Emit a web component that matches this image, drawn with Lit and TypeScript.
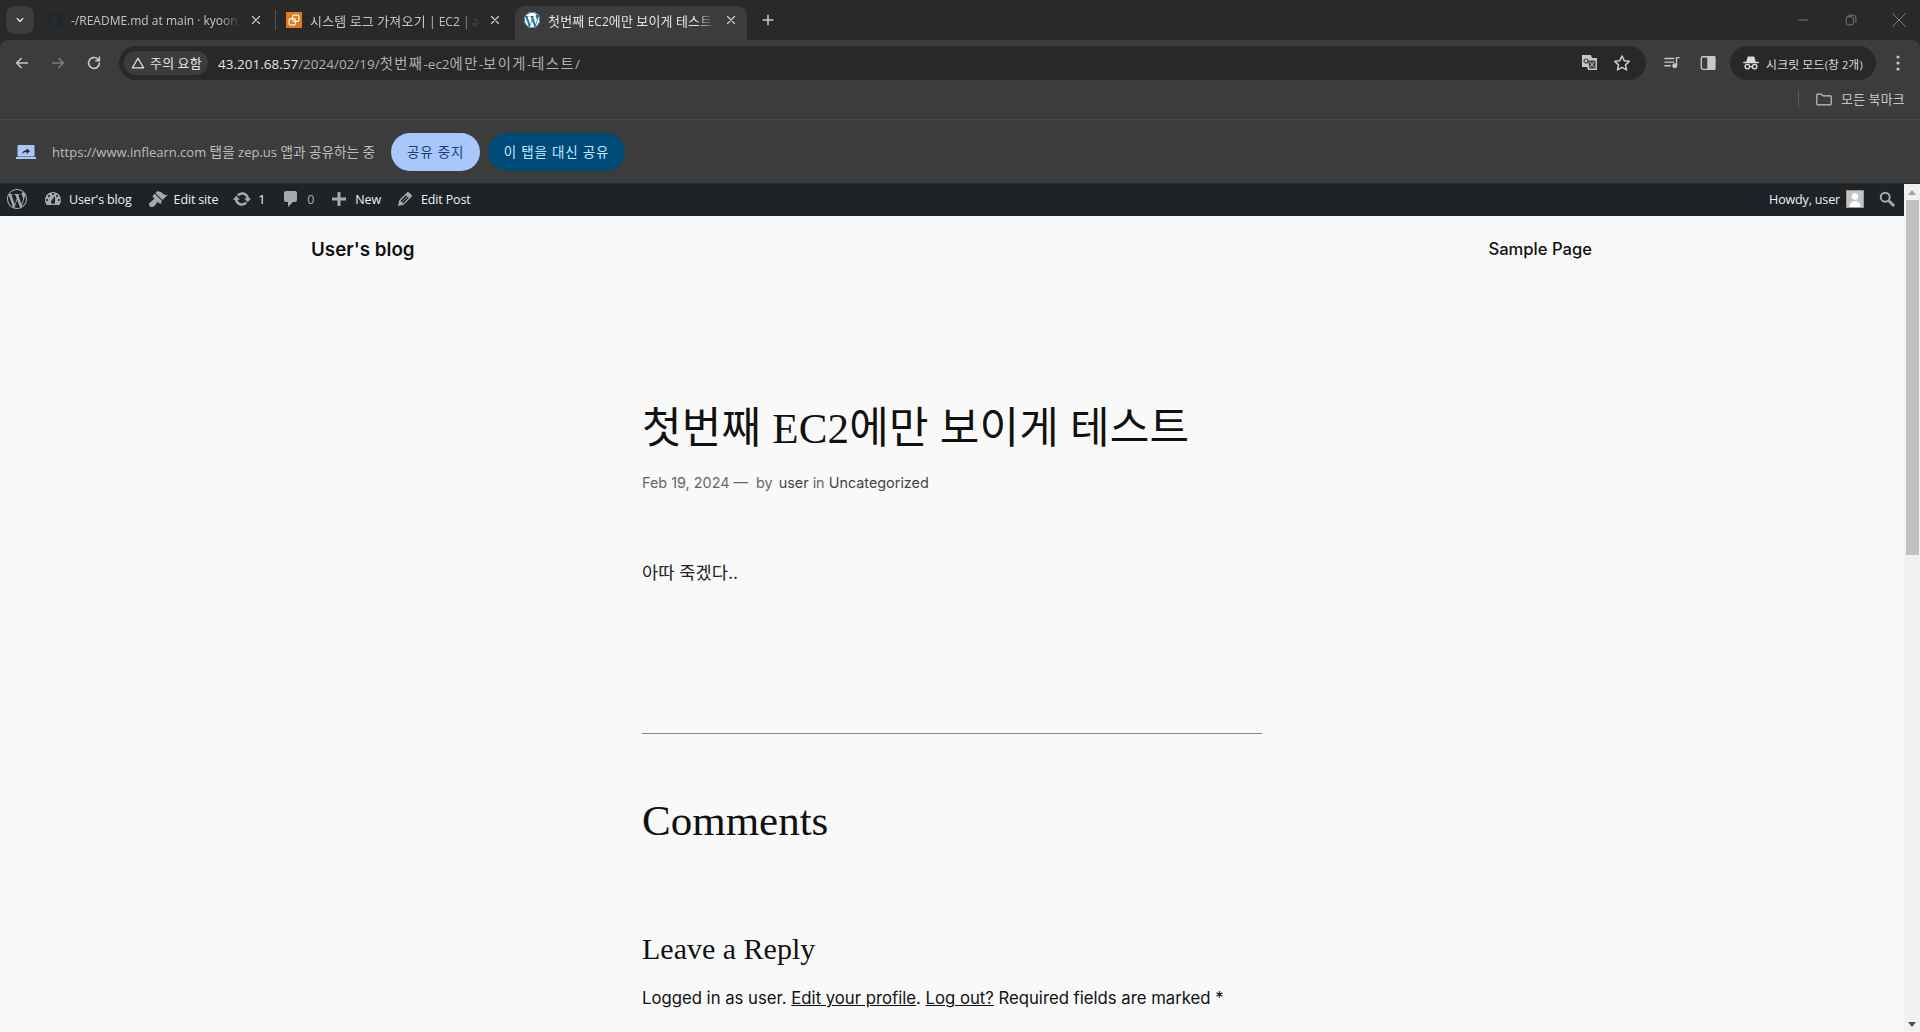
import {html, css, svg, LitElement} from 'lit';
import {customElement} from 'lit/decorators.js';
import {map} from 'lit/directives/map.js';

const WP_LOGO = 'M21.469 6.825c.84 1.537 1.318 3.3 1.318 5.175 0 3.979-2.156 7.456-5.363 9.325l3.295-9.527c.615-1.54.82-2.771.82-3.864 0-.405-.026-.78-.07-1.11m-7.981.105c.647-.03 1.232-.105 1.232-.105.582-.075.514-.93-.067-.899 0 0-1.755.135-2.88.135-1.064 0-2.85-.15-2.85-.15-.585-.03-.661.855-.075.885 0 0 .54.061 1.125.09l1.68 4.605-2.37 7.08L5.354 6.9c.649-.03 1.234-.1 1.234-.1.585-.075.516-.93-.065-.896 0 0-1.746.138-2.874.138-.2 0-.438-.008-.69-.015C4.911 3.15 8.235 1.215 12 1.215c2.809 0 5.365 1.072 7.286 2.833-.046-.003-.091-.009-.141-.009-1.06 0-1.812.923-1.812 1.914 0 .89.513 1.643 1.06 2.531.411.72.89 1.643.89 2.977 0 .915-.354 1.994-.821 3.479l-1.075 3.585-3.9-11.61.001.014zM12 22.784c-1.059 0-2.081-.153-3.048-.437l3.237-9.406 3.315 9.087c.024.053.05.101.078.149-1.12.393-2.325.609-3.582.609M1.211 12c0-1.564.336-3.05.935-4.39L7.29 21.709C3.694 19.96 1.212 16.271 1.211 12M12 0C5.385 0 0 5.385 0 12s5.385 12 12 12 12-5.385 12-12S18.615 0 12 0';
const GITHUB = 'M12 .297c-6.63 0-12 5.373-12 12 0 5.303 3.438 9.8 8.205 11.385.6.113.82-.258.82-.577 0-.285-.01-1.04-.015-2.04-3.338.724-4.042-1.61-4.042-1.61C4.422 18.07 3.633 17.7 3.633 17.7c-1.087-.744.084-.729.084-.729 1.205.084 1.838 1.236 1.838 1.236 1.07 1.835 2.809 1.305 3.495.998.108-.776.417-1.305.76-1.605-2.665-.3-5.466-1.332-5.466-5.93 0-1.31.465-2.38 1.235-3.22-.135-.303-.54-1.523.105-3.176 0 0 1.005-.322 3.3 1.23.96-.267 1.98-.399 3-.405 1.02.006 2.04.138 3 .405 2.28-1.552 3.285-1.23 3.285-1.23.645 1.653.24 2.873.12 3.176.765.84 1.23 1.91 1.23 3.22 0 4.61-2.805 5.625-5.475 5.92.42.36.81 1.096.81 2.22 0 1.606-.015 2.896-.015 3.286 0 .315.21.69.825.57C20.565 22.092 24 17.592 24 12.297c0-6.627-5.373-12-12-12';

/* dashicons, 20x20 */
const DASHBOARD = 'M3.76 16h12.48c1.1-1.37 1.76-3.11 1.76-5 0-4.42-3.58-8-8-8s-8 3.58-8 8c0 1.89.66 3.63 1.76 5zM10 4c.55 0 1 .45 1 1s-.45 1-1 1-1-.45-1-1 .45-1 1-1zM6 6c.55 0 1 .45 1 1s-.45 1-1 1-1-.45-1-1 .45-1 1-1zm8 0c.55 0 1 .45 1 1s-.45 1-1 1-1-.45-1-1 .45-1 1-1zm-5.37 5.55L12 7v6c0 1.1-.9 2-2 2s-2-.9-2-2c0-.57.24-1.08.63-1.45zM4 10c.55 0 1 .45 1 1s-.45 1-1 1-1-.45-1-1 .45-1 1-1zm12 0c.55 0 1 .45 1 1s-.45 1-1 1-1-.45-1-1 .45-1 1-1z';
const BRUSH = 'M14.48 11.06L7.41 3.99l1.5-1.5c.5-.56 2.3-.47 3.51.32 1.21.8 1.43 1.28 2.91 2.1 1.18.64 2.45 1.26 4.45.85zm-.71.71L6.7 4.7 4.93 6.47c-.39.39-.39 1.02 0 1.41l1.06 1.06c.39.39.39 1.03 0 1.42-.6.6-1.43 1.11-2.21 1.69-.35.26-.7.53-1.01.84C1.43 13.23 1 14.38 1 15.5 1 16.88 2.12 18 3.5 18c1.12 0 2.27-.43 3.13-1.34.31-.31.58-.66.84-1.01.58-.78 1.09-1.61 1.69-2.21.39-.39 1.03-.39 1.42 0l1.06 1.06c.39.39 1.02.39 1.41 0z';
const UPDATE = 'M10.2 3.28c3.53 0 6.43 2.61 6.92 6h2.08l-3.5 4-3.5-4h2.32c-.45-1.97-2.21-3.44-4.32-3.44-1.45 0-2.73.71-3.54 1.78L4.95 5.66C6.23 4.2 8.11 3.28 10.2 3.28zm-.4 13.44c-3.52 0-6.43-2.61-6.92-6H.8l3.5-4c1.17 1.33 2.33 2.67 3.5 4H5.48c.45 1.97 2.21 3.44 4.32 3.44 1.45 0 2.73-.71 3.54-1.78l1.71 1.95c-1.28 1.46-3.15 2.39-5.25 2.39z';
const COMMENT = 'M5 2h9c1.1 0 2 .9 2 2v7c0 1.1-.9 2-2 2h-2l-5 5v-5H5c-1.1 0-2-.9-2-2V4c0-1.1.9-2 2-2z';
const PLUS = 'M17 8.5v3h-5.5V17h-3v-5.5H3v-3h5.5V3h3v5.5z';
const PENCIL = 'M13.89 3.39l2.71 2.72c.46.46.42 1.24.03 1.64l-8.01 8.02-5.56 1.16 1.16-5.58s7.6-7.63 7.99-8.03c.39-.39 1.22-.39 1.68.07zm-2.73 2.79l-5.59 5.61 1.11 1.11 5.54-5.65zm-2.97 8.23l5.58-5.6-1.07-1.08-5.59 5.6z';

const fill = (d: string, size: number, box = 20) => html`
  <svg width=${size} height=${size} viewBox="0 0 ${box} ${box}" fill="currentColor"><path d=${d}></path></svg>`;

const line = (size: number, body: unknown, sw = 1.6) => html`
  <svg width=${size} height=${size} viewBox="0 0 20 20" fill="none" stroke="currentColor"
    stroke-width=${sw} stroke-linecap="round" stroke-linejoin="round">${body}</svg>`;

// the browser's Korean face runs wider than its latin one
const ko = (text: string) => text.split(/([가-힣]+)/).map((part, i) =>
  i % 2 ? html`<span class="ko">${part}</span>` : part);

const CLOSE = line(14, svg`<path d="M5 5l10 10M15 5L5 15"></path>`, 1.7);

@customElement('browser-chrome')
export class BrowserChrome extends LitElement {
  static styles = css`
  :host {
    background: #292929;
    color: #e3e3e3;
    display: block;
    font-family: 'Open Sans', 'Noto Sans CJK KR', sans-serif;
    font-size: 12px;
  }

  svg { display: block; flex: none; }

  .ko { font-size: 1.08em; letter-spacing: .02em; }

  #tabs {
    align-items: flex-end;
    display: flex;
    height: 40px;
    padding-left: 6px;
  }

  #dropdown {
    align-items: center;
    background: #3c3c3c;
    border-radius: 8px;
    display: flex;
    height: 28px;
    justify-content: center;
    margin: 0 6px 6px 0;
    width: 28px;
  }

  .tab {
    align-items: center;
    border-radius: 10px 10px 0 0;
    box-sizing: border-box;
    color: #c4c4c4;
    display: flex;
    gap: 8px;
    height: 34px;
    padding: 0 9px 6px 7px;
    width: 232px;
  }

  .tab.active {
    background: #3c3c3c;
    color: #e3e3e3;
    margin-left: 4px;
    padding-left: 9px;
  }

  .tab .favicon { height: 16px; width: 16px; }

  .tab .label {
    flex: 1;
    -webkit-mask-image: linear-gradient(to right, #000 88%, transparent);
    mask-image: linear-gradient(to right, #000 88%, transparent);
    overflow: hidden;
    white-space: nowrap;
  }

  .tab .x { color: #d0d0d0; }

  .tabsep {
    align-self: center;
    background: #555;
    height: 20px;
    margin: 0 3px;
    width: 1px;
  }

  .aws {
    align-items: center;
    background: #e07a1c;
    color: #fff;
    display: flex;
    justify-content: center;
  }

  #new-tab { color: #d0d0d0; margin: 0 0 12px 13px; }

  #win {
    align-items: center;
    align-self: flex-start;
    color: #8a8a8a;
    display: flex;
    gap: 31px;
    height: 40px;
    margin-left: auto;
    padding-right: 12px;
  }

  #toolbar {
    align-items: center;
    background: #3c3c3c;
    border-radius: 8px 8px 0 0;
    box-sizing: border-box;
    display: flex;
    height: 42px;
    padding: 4px 20px 0 13px;
  }

  .nav { color: #c7c7c7; margin-right: 18px; }
  .nav.off { color: #7d7d7d; }

  #omni {
    align-items: center;
    background: #282828;
    border-radius: 17px;
    box-sizing: border-box;
    display: flex;
    flex: 1;
    height: 34px;
    margin: 0 0 0 -2px;
    padding: 0 14px 0 5px;
  }

  #chip {
    align-items: center;
    background: #3c3c3c;
    border-radius: 12px;
    box-sizing: border-box;
    display: flex;
    font-size: 12px;
    gap: 4px;
    height: 24px;
    padding: 0 0 2px 6px;
    white-space: nowrap;
    width: 84px;
  }

  #chip svg { margin-top: 2px; }

  #url {
    color: #e3e3e3;
    flex: 1;
    font-size: 13.5px;
    margin: -2px 0 0 10px;
  }

  #url .ko { font-size: 1.06em; letter-spacing: .1em; }
  #url span.path { color: #b0b0b0; }

  #omni .end { color: #c7c7c7; margin-left: 12px; }

  .tool { color: #c7c7c7; margin-left: 18px; }

  #incognito {
    align-items: center;
    background: #282828;
    border-radius: 17px;
    box-sizing: border-box;
    color: #dcdcdc;
    display: flex;
    font-size: 11px;
    gap: 6px;
    height: 34px;
    margin-left: 13px;
    padding: 0 0 0 12px;
    white-space: nowrap;
    width: 146px;
  }

  #dots { color: #c7c7c7; margin-left: 20px; }

  #bookmarks {
    align-items: center;
    background: #3c3c3c;
    border-bottom: 1px solid #4a4a4a;
    box-sizing: border-box;
    color: #c7c7c7;
    display: flex;
    font-size: 12px;
    gap: 8px;
    height: 38px;
    justify-content: flex-end;
    padding: 0 15px 4px 0;
  }

  #bookmarks .sep {
    background: #5c5c5c;
    height: 16px;
    margin-right: 8px;
    width: 1px;
  }

  #share {
    align-items: center;
    background: #3c3c3c;
    border-bottom: 1px solid #2a2a2a;
    box-sizing: border-box;
    display: flex;
    height: 64px;
    padding-left: 16px;
  }

  #share .msg {
    color: #bdbdbd;
    font-size: 13px;
    margin: 0 16px;
    padding-bottom: 2px;
    white-space: nowrap;
  }

  #share .msg .ko { font-size: 1.05em; letter-spacing: 0; }

  .pill {
    align-items: center;
    border-radius: 19px;
    box-sizing: border-box;
    display: flex;
    font-size: 13.5px;
    height: 38px;
    justify-content: center;
    letter-spacing: .8px;
    padding-bottom: 1px;
  }

  .pill.stop { background: #a8c7fa; color: #1d3f72; width: 89px; }
  .pill.swap { background: #004a77; color: #c2e7ff; margin-left: 8px; width: 137px; }
  `;

  render() {
    return html`
    <div id="tabs">
      <div id="dropdown">${line(14, svg`<path d="M6 8l4 4 4-4"></path>`, 2)}</div>
      <div class="tab">
        <span class="favicon" style="color:#1d2733">${fill(GITHUB, 16, 24)}</span>
        <span class="label">-/README.md at main · kyoon</span>
        <span class="x">${CLOSE}</span>
      </div>
      <div class="tabsep"></div>
      <div class="tab">
        <span class="favicon aws">${line(14, svg`<rect x="8" y="3" width="9" height="9" rx="2"></rect><rect x="3" y="8" width="9" height="9" rx="2"></rect>`, 1.6)}</span>
        <span class="label">${ko('시스템 로그 가져오기 | EC2 | a')}</span>
        <span class="x">${CLOSE}</span>
      </div>
      <div class="tab active">
        <span class="favicon" style="background:#fff;border-radius:50%;color:#21759b">${fill(WP_LOGO, 16, 24)}</span>
        <span class="label">${ko('첫번째 EC2에만 보이게 테스트')}</span>
        <span class="x">${CLOSE}</span>
      </div>
      <div id="new-tab">${line(16, svg`<path d="M10 4v12M4 10h12"></path>`, 1.8)}</div>
      <div id="win">
        ${line(16, svg`<path d="M3 10h12" stroke-linecap="butt"></path>`, 1)}
        ${line(16, svg`<rect x="4" y="6" width="9" height="10" rx="2"></rect><path d="M7 4h6a3 3 0 0 1 3 3v6"></path>`, 1)}
        ${line(18, svg`<path d="M3 3l14 14M17 3L3 17"></path>`, 1)}
      </div>
    </div>

    <div id="toolbar">
      <span class="nav">${line(18, svg`<path d="M16 10H4M9 5l-5 5 5 5"></path>`, 1.8)}</span>
      <span class="nav off">${line(18, svg`<path d="M4 10h12M11 5l5 5-5 5"></path>`, 1.8)}</span>
      <span class="nav">${line(18, svg`<path d="M16 10a6 6 0 1 1-2-4.500L16 7.500M16 3.500v4h-4"></path>`, 1.8)}</span>
      <div id="omni">
        <div id="chip">
          ${line(16, svg`<path d="M10 4l7 12H3z"></path>`, 1.6)}
          <span>${ko('주의 요함')}</span>
        </div>
        <div id="url">43.201.68.57<span class="path">${ko('/2024/02/19/첫번째-ec2에만-보이게-테스트/')}</span></div>
        <span class="end">${line(20, svg`<path d="M2 2h9l1 3h5v12H8l-1-3H2z" fill="#c7c7c7" stroke="none"></path><path d="M8 7h8v9H9z" fill="#3c3c3c" stroke="#c7c7c7" stroke-width="1"></path><path d="M10 9l4 5M14 9l-4 5" stroke="#c7c7c7" stroke-width="1"></path><circle cx="6" cy="8" r="2" stroke="#3c3c3c" stroke-width="1.200"></circle>`, 1)}</span>
        <span class="end">${line(20, svg`<path d="M10 3l2.200 4.700 5 .6-3.700 3.500 1 5.100L10 14.400l-4.500 2.500 1-5.100L2.800 8.300l5-.6z"></path>`, 1.6)}</span>
      </div>
      <span class="tool" style="margin-left:17px">${line(18, svg`<path d="M2 5h10M2 9h10M2 13h6M15 4v9"></path><circle cx="13" cy="13" r="2" fill="currentColor"></circle><path d="M15 4h3"></path>`, 1.5)}</span>
      <span class="tool">${line(18, svg`<rect x="2.500" y="3" width="15" height="14" rx="2"></rect><rect x="10" y="3" width="7.500" height="14" fill="currentColor"></rect>`, 1.5)}</span>
      <div id="incognito">
        ${line(18, svg`<path d="M2 9.500h16"></path><path d="M5.500 9l1.500-5.500h6L14.500 9z" fill="currentColor"></path><circle cx="6" cy="14" r="2.500"></circle><circle cx="14" cy="14" r="2.500"></circle><path d="M8.500 14h3"></path>`, 1.6)}
        <span>${ko('시크릿 모드(창 2개)')}</span>
      </div>
      <span id="dots">
        <svg width="4" height="16" viewBox="0 0 4 16" fill="currentColor"><circle cx="2" cy="2" r="1.600"></circle><circle cx="2" cy="8" r="1.600"></circle><circle cx="2" cy="14" r="1.600"></circle></svg>
      </span>
    </div>

    <div id="bookmarks">
      <div class="sep"></div>
      ${line(18, svg`<path d="M2 5.500a1 1 0 0 1 1-1h4l2 2h8a1 1 0 0 1 1 1v8a1 1 0 0 1-1 1H3a1 1 0 0 1-1-1z"></path>`, 1.3)}
      <span>${ko('모든 북마크')}</span>
    </div>

    <div id="share">
      <svg width="20" height="14" viewBox="0 0 20 14">
        <rect x="1.500" y="0" width="17" height="11.500" rx="1" fill="#a8c7fa"></rect>
        <rect x="0" y="12" width="20" height="2" fill="#a8c7fa"></rect>
        <path d="M6 9c.3-2.500 2-3.800 4.500-3.800V3.300L14 6.200l-3.500 2.900V7C8.800 7 7.200 7.500 6 9z" fill="#2a2a2a"></path>
      </svg>
      <span class="msg">${ko('https://www.inflearn.com 탭을 zep.us 앱과 공유하는 중')}</span>
      <div class="pill stop">공유 중지</div>
      <div class="pill swap">이 탭을 대신 공유</div>
    </div>
    `;
  }
}

interface BarItem {
  icon: string;
  label: string;
  dim?: boolean;
  gap: number;
}

const BAR_ITEMS: BarItem[] = [
  {icon: DASHBOARD, label: "User's blog", gap: 16},
  {icon: BRUSH, label: 'Edit site', gap: 14},
  {icon: UPDATE, label: '1', gap: 16},
  {icon: COMMENT, label: '0', dim: true, gap: 15},
  {icon: PLUS, label: 'New', gap: 14},
  {icon: PENCIL, label: 'Edit Post', gap: 0},
];

@customElement('wp-page')
export class WpPage extends LitElement {
  static styles = css`
  :host {
    background: #f9f9f9;
    color: #111;
    display: block;
    flex: 1;
    font-family: Inter, 'Noto Sans CJK KR', sans-serif;
    min-width: 0;
  }

  svg { display: block; flex: none; }

  #adminbar {
    align-items: center;
    background: #1d2327;
    box-sizing: border-box;
    color: #f0f0f1;
    display: flex;
    font-family: 'Open Sans', sans-serif;
    font-size: 12.5px;
    height: 32px;
    letter-spacing: -.15px;
    padding: 0 8px 2px 7px;
  }

  #adminbar .logo { color: #a7aaad; margin-right: 16px; }

  .item {
    align-items: center;
    display: flex;
    gap: 6px;
    white-space: nowrap;
  }

  .item svg { color: #a7aaad; }
  .item.dim span { color: #a7aaad; }

  #howdy {
    align-items: center;
    display: flex;
    gap: 6px;
    margin-left: auto;
  }

  #avatar {
    background: #c4c4c4;
    border: 1px solid #9a9a9a;
    box-sizing: border-box;
    height: 18px;
    width: 18px;
  }

  #search { color: #a7aaad; margin-left: 8px; }

  #head {
    align-items: center;
    display: flex;
    font-weight: 500;
    height: 66px;
    justify-content: space-between;
    padding: 0 312px 0 311px;
  }

  #head .title { font-size: 18.800px; font-weight: 600; }
  #head .page { font-size: 16.600px; }

  main {
    margin: 0 auto;
    padding-top: 121px;
    width: 620px;
  }

  h1 {
    font-family: 'Liberation Serif', 'Noto Sans CJK KR', serif;
    font-size: 43px;
    font-weight: 400;
    letter-spacing: .2px;
    line-height: 1.2;
    margin: 0;
  }

  .meta {
    color: #666;
    font-size: 14.400px;
    margin-top: 19px;
  }

  .meta b { color: #444; font-weight: 400; }
  .meta .by { margin-left: 4px; }
  .meta .author { margin-left: 2px; }

  .body {
    color: #222;
    font-size: 17.600px;
    margin: 68px 0 0;
  }

  hr {
    background: #888;
    border: 0;
    height: 1px;
    margin: 149px 0 0;
  }

  h2 {
    font-family: 'Liberation Serif', serif;
    font-size: 43px;
    font-weight: 400;
    line-height: 1.2;
    margin: 61px 0 0;
  }

  h3 {
    font-family: 'Liberation Serif', serif;
    font-size: 30px;
    font-weight: 400;
    line-height: 1.2;
    margin: 85px 0 0;
  }

  .login {
    font-size: 16.720px;
    margin-top: 21px;
  }

  .login a { color: inherit; text-decoration: underline; }
  `;

  render() {
    return html`
    <div id="adminbar">
      <span class="logo">${fill(WP_LOGO, 20, 24)}</span>
      ${map(BAR_ITEMS, (item) => html`
      <div class="item ${item.dim ? 'dim' : ''}" style="margin-right:${item.gap}px">
        ${fill(item.icon, 20)}
        <span>${item.label}</span>
      </div>
      `)}
      <div id="howdy">
        <span>Howdy, user</span>
        <div id="avatar">
          <svg width="16" height="16" viewBox="0 0 16 16" fill="#fff"><circle cx="8" cy="5.500" r="3.200"></circle><path d="M2.500 16c.3-4 2.500-6 5.500-6s5.200 2 5.500 6z"></path></svg>
        </div>
        <span id="search">${line(18, svg`<circle cx="8" cy="8" r="5"></circle><path d="M12 12l5 5" stroke-width="3"></path>`, 2.2)}</span>
      </div>
    </div>

    <div id="head">
      <span class="title">User's blog</span>
      <span class="page">Sample Page</span>
    </div>

    <main>
      <h1>첫번째 EC2에만 보이게 테스트</h1>
      <div class="meta">Feb 19, 2024 — <span class="by">by</span> <b class="author">user</b> in <b>Uncategorized</b></div>
      <p class="body">아따 죽겠다..</p>
      <hr />
      <h2>Comments</h2>
      <h3>Leave a Reply</h3>
      <div class="login">Logged in as user. <a>Edit your profile</a>. <a>Log out?</a> Required fields are marked *</div>
    </main>
    `;
  }
}

@customElement('app-root')
export class AppRoot extends LitElement {
  static styles = css`
  :host {
    background: #f9f9f9;
    display: block;
    height: 1032px;
    overflow: hidden;
    width: 1920px;
  }

  #view {
    display: flex;
    height: 848px;
    overflow: hidden;
  }

  #scroll {
    background: #f1f1f1;
    display: flex;
    flex-direction: column;
    flex: none;
    width: 16px;
  }

  .arrow {
    align-items: center;
    display: flex;
    height: 16px;
    justify-content: center;
  }

  .thumb {
    background: #c1c1c1;
    height: 355px;
    margin: 0 1px 0 2px;
  }

  .track { flex: 1; }
  `;

  render() {
    return html`
    <browser-chrome></browser-chrome>
    <div id="view">
      <wp-page></wp-page>
      <div id="scroll">
        <div class="arrow"><svg width="8" height="5" viewBox="0 0 8 5"><path d="M4 0l4 5H0z" fill="#a3a3a3"></path></svg></div>
        <div class="thumb"></div>
        <div class="track"></div>
        <div class="arrow"><svg width="8" height="5" viewBox="0 0 8 5"><path d="M0 0h8L4 5z" fill="#505050"></path></svg></div>
      </div>
    </div>
    `;
  }
}
